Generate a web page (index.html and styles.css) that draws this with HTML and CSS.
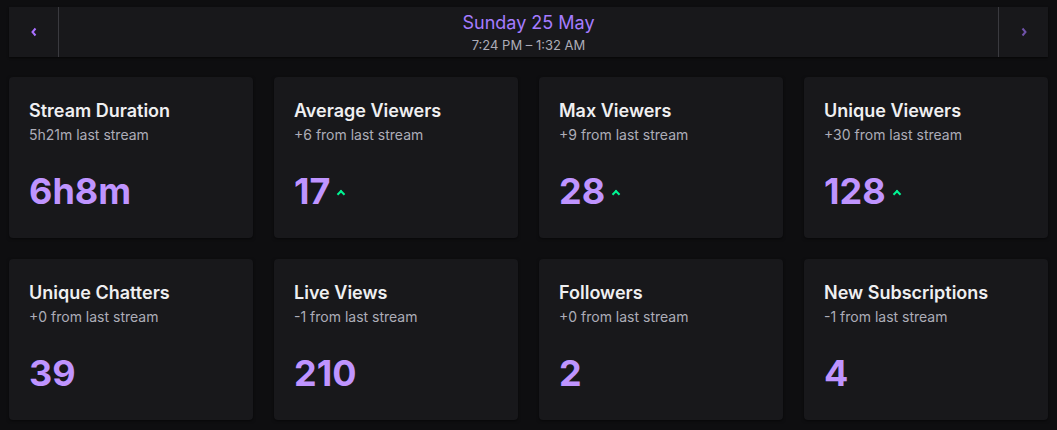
FILE: index.html
```html
<!DOCTYPE html>
<html lang="en">
  <head>
    <meta charset="UTF-8" />
    <meta name="viewport" content="width=device-width, initial-scale=1.0" />
    <title>Stream stats</title>
    <link rel="stylesheet" href="styles.css">
  </head>
  <body>
    <header class="day-nav">
      <button class="nav-btn nav-prev" type="button" aria-label="Previous stream">
        <svg width="8" height="10" viewBox="0 0 8 10"><polyline points="5.5,1.5 2.5,5 5.5,8.5" /></svg>
      </button>
      <div class="day-info">
        <div class="day-date">Sunday 25 May</div>
        <div class="day-time">7:24 PM – 1:32 AM</div>
      </div>
      <button class="nav-btn nav-next" type="button" aria-label="Next stream">
        <svg width="8" height="10" viewBox="0 0 8 10"><polyline points="2.5,1.5 5.5,5 2.5,8.5" /></svg>
      </button>
    </header>

    <main class="stats">
      <div class="card">
        <h3 class="card-title">Stream Duration</h3>
        <p class="card-sub">5h21m last stream</p>
        <div class="card-value">6h8m</div>
      </div>
      <div class="card">
        <h3 class="card-title">Average Viewers</h3>
        <p class="card-sub">+6 from last stream</p>
        <div class="card-value">17 <span class="up"></span></div>
      </div>
      <div class="card">
        <h3 class="card-title">Max Viewers</h3>
        <p class="card-sub">+9 from last stream</p>
        <div class="card-value">28 <span class="up"></span></div>
      </div>
      <div class="card">
        <h3 class="card-title">Unique Viewers</h3>
        <p class="card-sub">+30 from last stream</p>
        <div class="card-value">128 <span class="up"></span></div>
      </div>
      <div class="card">
        <h3 class="card-title">Unique Chatters</h3>
        <p class="card-sub">+0 from last stream</p>
        <div class="card-value">39</div>
      </div>
      <div class="card">
        <h3 class="card-title">Live Views</h3>
        <p class="card-sub">-1 from last stream</p>
        <div class="card-value">210</div>
      </div>
      <div class="card">
        <h3 class="card-title">Followers</h3>
        <p class="card-sub">+0 from last stream</p>
        <div class="card-value">2</div>
      </div>
      <div class="card">
        <h3 class="card-title">New Subscriptions</h3>
        <p class="card-sub">-1 from last stream</p>
        <div class="card-value">4</div>
      </div>
    </main>
  </body>
</html>
```

FILE: styles.css
```css
html,
body {
  margin: 0;
  background: #0e0e10;
}
body {
  padding: 7px 9px;
  font-family: Inter, "Noto Sans", sans-serif;
  color: #efeff1;
}
.day-nav {
  display: flex;
  height: 50px;
  background: #18181b;
  box-shadow: 0 1px 2px rgba(0, 0, 0, 0.6);
}
.nav-btn {
  width: 50px;
  padding: 0;
  border: 0;
  background: transparent;
  display: flex;
  align-items: center;
  justify-content: center;
}
.nav-prev {
  border-right: 1px solid #3a3a3f;
}
.nav-next {
  border-left: 1px solid #3a3a3f;
}
.nav-btn svg polyline {
  fill: none;
  stroke: #a970ff;
  stroke-width: 2;
}
.nav-next svg polyline {
  stroke: #6f52a8;
}
.day-info {
  flex: 1;
  display: flex;
  flex-direction: column;
  align-items: center;
  justify-content: center;
}
.day-date {
  font-size: 18px;
  line-height: 22px;
  color: #a57cff;
}
.day-time {
  margin-top: 3px;
  font-size: 13px;
  line-height: 16px;
  color: #adadb8;
}
.stats {
  margin-top: 20px;
  display: grid;
  grid-template-columns: repeat(4, 1fr);
  gap: 21px;
}
.card {
  background: #18181b;
  border-radius: 4px;
  padding: 22px 20px 25px;
  box-shadow: 0 1px 3px rgba(0, 0, 0, 0.5);
}
.card-title {
  margin: 0;
  font-size: 18px;
  line-height: 24px;
  font-weight: 600;
}
.card-sub {
  margin: 2px 0 0 0;
  font-size: 14px;
  line-height: 20px;
  color: #adadb8;
}
.card-value {
  margin-top: 24px;
  font-size: 36px;
  line-height: 44px;
  font-weight: 700;
  color: #bf94ff;
  display: flex;
  align-items: center;
}
.up {
  width: 4px;
  height: 4px;
  margin-left: 8px;
  margin-top: 6px;
  border-top: 2px solid #00f593;
  border-left: 2px solid #00f593;
  transform: rotate(45deg);
}
```
